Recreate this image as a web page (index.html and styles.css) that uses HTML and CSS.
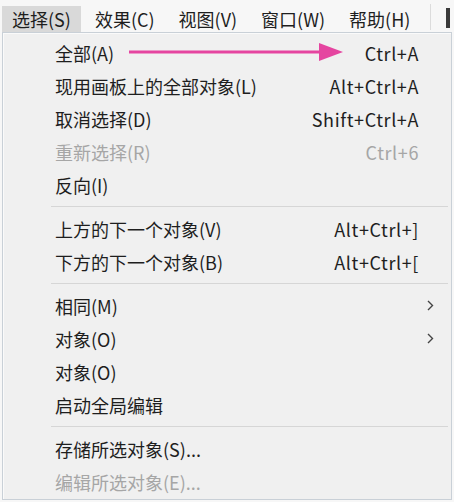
FILE: index.html
```html
<!DOCTYPE html>
<html lang="zh-CN">
<head>
    <meta charset="UTF-8">
    <title>选择菜单</title>
    <link rel="stylesheet" href="styles.css">
</head>
<body>
    <!-- Top menu bar -->
    <div class="menubar">
        <span class="menu-title active">选择(S)</span>
        <span class="menu-title">效果(C)</span>
        <span class="menu-title">视图(V)</span>
        <span class="menu-title">窗口(W)</span>
        <span class="menu-title">帮助(H)</span>
        <span class="bar-divider"></span>
        <span class="bar-grip"></span>
    </div>

    <!-- Dropdown for 选择 -->
    <div class="dropdown">
        <div class="row">
            <span class="label">全部(A)</span>
            <span class="key">Ctrl+A</span>
            <svg class="pointer" width="220" height="20" viewBox="0 0 220 20">
                <line x1="0" y1="10" x2="194" y2="10" stroke="#e545a0" stroke-width="3"/>
                <polygon points="190,1 214,10 190,19" fill="#e545a0"/>
            </svg>
        </div>
        <div class="row">
            <span class="label">现用画板上的全部对象(L)</span>
            <span class="key">Alt+Ctrl+A</span>
        </div>
        <div class="row">
            <span class="label">取消选择(D)</span>
            <span class="key">Shift+Ctrl+A</span>
        </div>
        <div class="row disabled">
            <span class="label">重新选择(R)</span>
            <span class="key">Ctrl+6</span>
        </div>
        <div class="row">
            <span class="label">反向(I)</span>
        </div>

        <div class="sep"></div>

        <div class="row">
            <span class="label">上方的下一个对象(V)</span>
            <span class="key">Alt+Ctrl+]</span>
        </div>
        <div class="row">
            <span class="label">下方的下一个对象(B)</span>
            <span class="key">Alt+Ctrl+[</span>
        </div>

        <div class="sep"></div>

        <div class="row">
            <span class="label">相同(M)</span>
            <svg class="chevron" width="7" height="11" viewBox="0 0 7 11"><path d="M1 1 L5.5 5.5 L1 10" fill="none" stroke="#444" stroke-width="1.4"/></svg>
        </div>
        <div class="row">
            <span class="label">对象(O)</span>
            <svg class="chevron" width="7" height="11" viewBox="0 0 7 11"><path d="M1 1 L5.5 5.5 L1 10" fill="none" stroke="#444" stroke-width="1.4"/></svg>
        </div>
        <div class="row">
            <span class="label">对象(O)</span>
        </div>
        <div class="row">
            <span class="label">启动全局编辑</span>
        </div>

        <div class="sep"></div>

        <div class="row">
            <span class="label">存储所选对象(S)...</span>
        </div>
        <div class="row disabled">
            <span class="label">编辑所选对象(E)...</span>
        </div>
    </div>
</body>
</html>
```

FILE: styles.css
```css
body {
    margin: 0;
    background-color: #f7f7f7;
    font-family: "Noto Sans CJK SC", "Noto Sans", sans-serif;
    font-size: 18px;
    color: #1e1e1e;
}

.menubar {
    display: flex;
    align-items: flex-end;
    height: 32px;
    padding-left: 2px;
    background-color: #f7f7f7;
}

.menu-title {
    display: flex;
    align-items: center;
    height: 26px;
    padding: 0 10px;
    margin-right: 4px;
    line-height: 1;
}

.menu-title.active {
    background-color: #d9d9d9;
}

.bar-divider {
    width: 1px;
    height: 26px;
    margin: 0 0 2px 6px;
    background-color: #dcdcdc;
}

.bar-grip {
    width: 4px;
    height: 20px;
    margin: 0 0 4px 15px;
    background-color: #3a3a3a;
}

.dropdown {
    margin: 0 2px 2px 2px;
    padding: 3px 0 0 0;
    height: 463px;
    background-color: #f0f0f0;
    border: 1px solid #c9d0d7;
    box-shadow: inset 1px 1px 0 #fafafa;
}

.row {
    position: relative;
    display: flex;
    align-items: center;
    height: 33px;
    padding: 0 32px 0 52px;
    line-height: 1;
}

.row .label {
    flex: 1;
}

.row .key {
    letter-spacing: 0.6px;
}

.row.disabled {
    color: #a6a6a6;
}

.chevron {
    margin-right: -15px;
}

/* annotation arrow over the first row */
.pointer {
    position: absolute;
    left: 126px;
    top: 6px;
}

.sep {
    height: 1px;
    margin: 5px 3px 5px 48px;
    background-color: #d6d6d6;
}
```
